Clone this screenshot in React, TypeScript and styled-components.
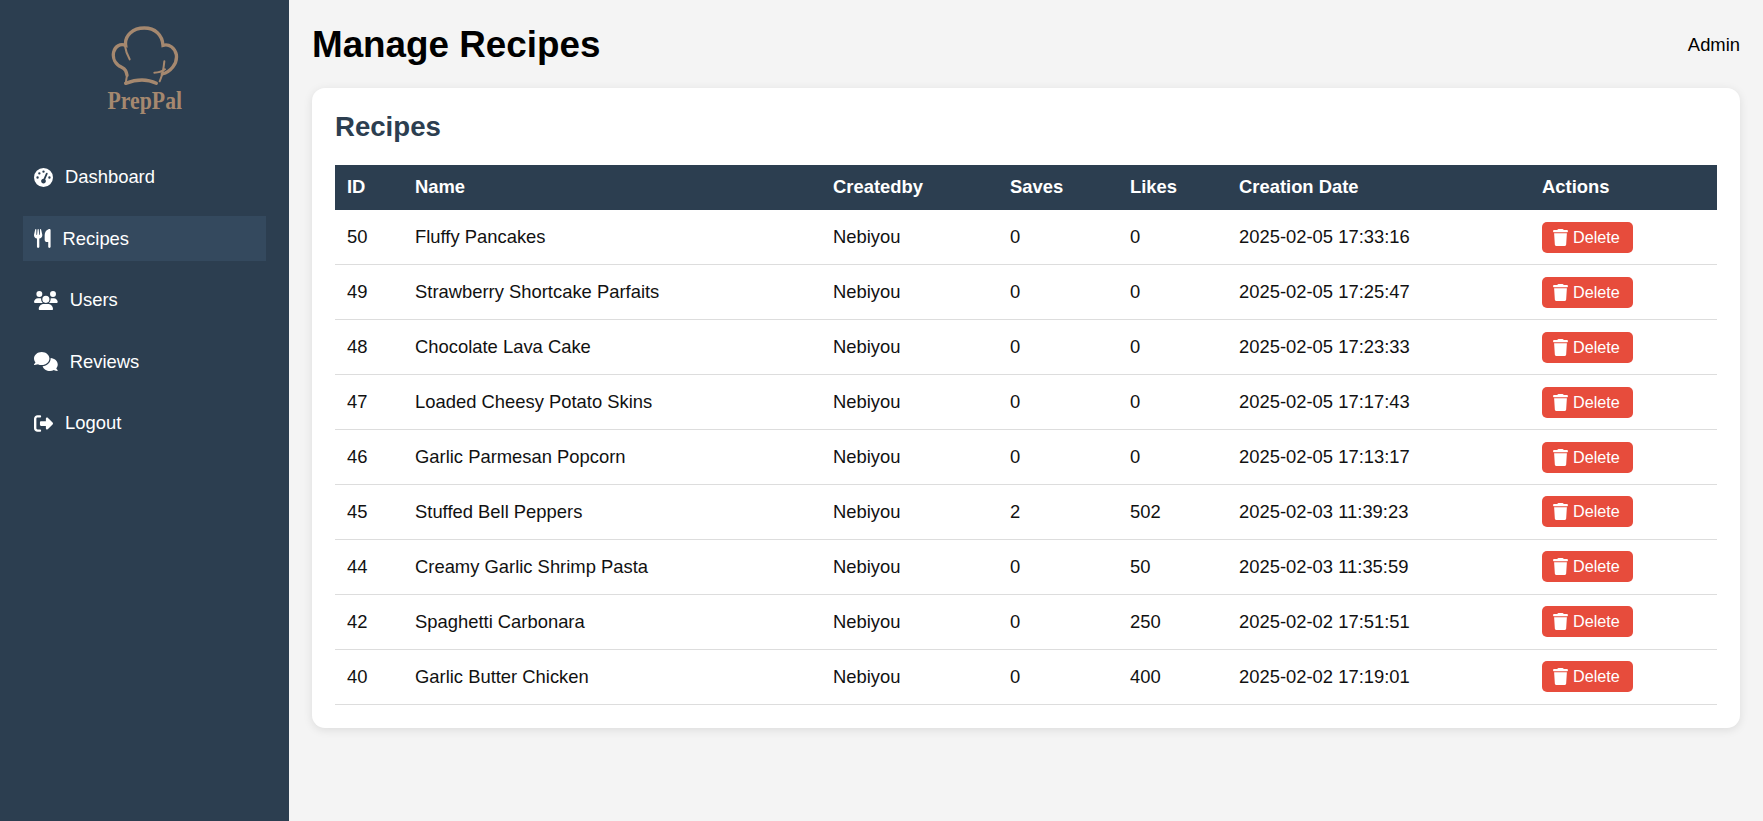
import { createGlobalStyle } from "styled-components";
import styled from "styled-components";
import {
  FaGaugeHigh,
  FaUtensils,
  FaUsers,
  FaComments,
  FaRightFromBracket,
  FaTrash,
} from "react-icons/fa6";
import type { IconType } from "react-icons";

const GlobalStyle = createGlobalStyle`
  * {
    box-sizing: border-box;
  }
  body {
    margin: 0;
    background: #f4f4f4;
    font-family: "Liberation Sans", Arial, sans-serif;
    color: #000;
  }
`;

const Layout = styled.div`
  display: flex;
  min-height: 100vh;
`;

const Sidebar = styled.aside`
  width: 289px;
  flex-shrink: 0;
  background: #2c3e50;
  padding: 26px 23px 0;
`;

const Logo = styled.div`
  display: flex;
  flex-direction: column;
  align-items: center;
  margin-bottom: 39.5px;
  color: #a5886f;
`;

const LogoText = styled.span`
  font-family: "Liberation Serif", serif;
  font-weight: 700;
  font-size: 25px;
  line-height: 28px;
  margin-top: 1px;
  transform: scaleX(0.87);
`;

const Nav = styled.nav`
  display: flex;
  flex-direction: column;
  gap: 16.6px;
`;

const NavItem = styled.a<{ $active?: boolean; $iconWidth: number }>`
  display: flex;
  align-items: center;
  gap: 12px;
  height: 45px;
  padding-left: 11px;
  font-size: 18.4px;
  color: #fff;
  background: ${(props) => (props.$active ? "#34495e" : "transparent")};

  svg {
    height: 19px;
    width: ${(props) => props.$iconWidth}px;
  }
`;

const Main = styled.main`
  flex: 1;
  padding: 0 23px;
`;

const TopBar = styled.header`
  display: flex;
  justify-content: space-between;
  align-items: center;
  height: 88px;
  padding-top: 2px;
`;

const Title = styled.h1`
  margin: 0;
  font-size: 36.8px;
  font-weight: 700;
`;

const AdminLabel = styled.span`
  font-size: 18.4px;
`;

const Card = styled.section`
  background: #fff;
  border-radius: 13px;
  padding: 23px 23px 23px;
  box-shadow: 0 2px 10px rgba(0, 0, 0, 0.1);
`;

const CardTitle = styled.h2`
  margin: 0 0 23px;
  font-size: 27.6px;
  line-height: 31px;
  font-weight: 700;
  color: #2c3e50;
`;

const Table = styled.table`
  width: 100%;
  table-layout: fixed;
  border-collapse: collapse;
  font-size: 18.4px;
`;

const Col = styled.col<{ $width: number }>`
  width: ${(props) => props.$width}px;
`;

const HeadCell = styled.th`
  height: 45px;
  padding: 0 12px 1px;
  text-align: left;
  font-weight: 700;
  color: #fff;
  background: #2c3e50;
`;

const Cell = styled.td`
  height: 54.9px;
  padding: 0 12px;
  color: #111;
  border-bottom: 1px solid #ddd;
`;

const DeleteButton = styled.button`
  display: inline-flex;
  align-items: center;
  gap: 5px;
  width: 91px;
  height: 31px;
  padding: 0 11px;
  border: none;
  border-radius: 5px;
  background: #e74c3c;
  color: #fff;
  font-family: inherit;
  font-size: 16.2px;
  vertical-align: middle;

  svg {
    height: 17px;
    width: 15px;
  }
`;

const columns = [
  { label: "ID", width: 68 },
  { label: "Name", width: 418 },
  { label: "Createdby", width: 177 },
  { label: "Saves", width: 120 },
  { label: "Likes", width: 109 },
  { label: "Creation Date", width: 303 },
  { label: "Actions", width: 187 },
];

const recipes = [
  { id: 50, name: "Fluffy Pancakes", saves: 0, likes: 0, date: "2025-02-05 17:33:16" },
  { id: 49, name: "Strawberry Shortcake Parfaits", saves: 0, likes: 0, date: "2025-02-05 17:25:47" },
  { id: 48, name: "Chocolate Lava Cake", saves: 0, likes: 0, date: "2025-02-05 17:23:33" },
  { id: 47, name: "Loaded Cheesy Potato Skins", saves: 0, likes: 0, date: "2025-02-05 17:17:43" },
  { id: 46, name: "Garlic Parmesan Popcorn", saves: 0, likes: 0, date: "2025-02-05 17:13:17" },
  { id: 45, name: "Stuffed Bell Peppers", saves: 2, likes: 502, date: "2025-02-03 11:39:23" },
  { id: 44, name: "Creamy Garlic Shrimp Pasta", saves: 0, likes: 50, date: "2025-02-03 11:35:59" },
  { id: 42, name: "Spaghetti Carbonara", saves: 0, likes: 250, date: "2025-02-02 17:51:51" },
  { id: 40, name: "Garlic Butter Chicken", saves: 0, likes: 400, date: "2025-02-02 17:19:01" },
];

const navItems: { label: string; icon: IconType; iconWidth: number; active?: boolean }[] = [
  { label: "Dashboard", icon: FaGaugeHigh, iconWidth: 19 },
  { label: "Recipes", icon: FaUtensils, iconWidth: 16.6, active: true },
  { label: "Users", icon: FaUsers, iconWidth: 23.75 },
  { label: "Reviews", icon: FaComments, iconWidth: 23.75 },
  { label: "Logout", icon: FaRightFromBracket, iconWidth: 19 },
];

function HatLogo() {
  return (
    <svg width="68" height="60" viewBox="330 76 204 180" fill="none" stroke="currentColor" strokeLinecap="round">
      <path
        strokeWidth="10"
        d="M378 224C376 212 374 206 362 200C342 190 334 172 338 154C342 136 358 128 374 134C370 104 396 82 430 82C462 82 484 102 486 134C504 128 522 142 526 162C530 190 508 214 484 220"
      />
      <path strokeWidth="10" d="M374 248C400 238 434 232 466 248" />
      <path strokeWidth="6" d="M378 224L374 248M372 136C374 150 378 162 386 176M490 182C488 204 484 224 476 242M460 216C472 216 482 214 492 206" />
    </svg>
  );
}

export default function App() {
  return (
    <Layout>
      <GlobalStyle />
      <Sidebar>
        <Logo>
          <HatLogo />
          <LogoText>PrepPal</LogoText>
        </Logo>
        <Nav>
          {navItems.map((item) => (
            <NavItem key={item.label} $active={item.active} $iconWidth={item.iconWidth}>
              <item.icon />
              {item.label}
            </NavItem>
          ))}
        </Nav>
      </Sidebar>
      <Main>
        <TopBar>
          <Title>Manage Recipes</Title>
          <AdminLabel>Admin</AdminLabel>
        </TopBar>
        <Card>
          <CardTitle>Recipes</CardTitle>
          <Table>
            <colgroup>
              {columns.map((col) => (
                <Col key={col.label} $width={col.width} />
              ))}
            </colgroup>
            <thead>
              <tr>
                {columns.map((col) => (
                  <HeadCell key={col.label}>{col.label}</HeadCell>
                ))}
              </tr>
            </thead>
            <tbody>
              {recipes.map((recipe) => (
                <tr key={recipe.id}>
                  <Cell>{recipe.id}</Cell>
                  <Cell>{recipe.name}</Cell>
                  <Cell>Nebiyou</Cell>
                  <Cell>{recipe.saves}</Cell>
                  <Cell>{recipe.likes}</Cell>
                  <Cell>{recipe.date}</Cell>
                  <Cell>
                    <DeleteButton>
                      <FaTrash />
                      Delete
                    </DeleteButton>
                  </Cell>
                </tr>
              ))}
            </tbody>
          </Table>
        </Card>
      </Main>
    </Layout>
  );
}
